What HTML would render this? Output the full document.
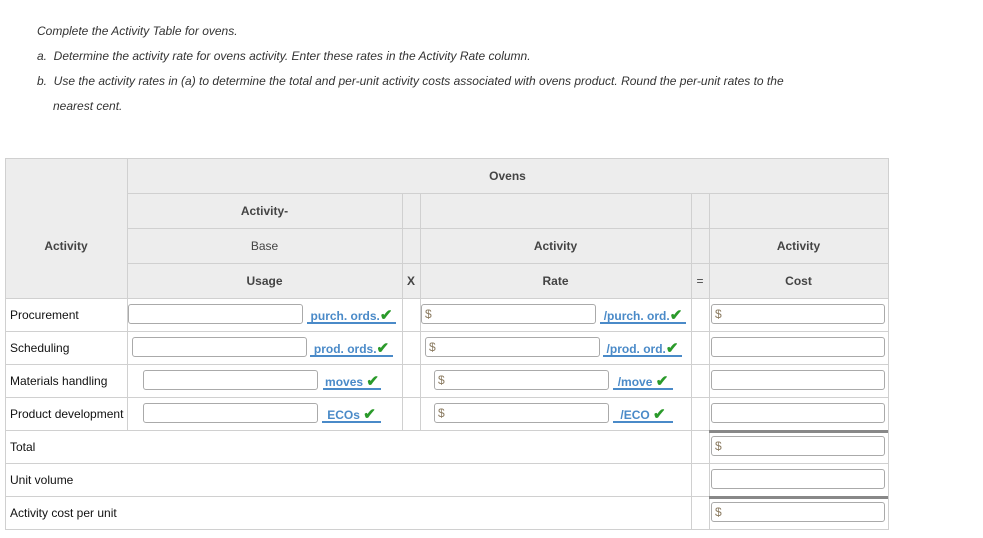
<!DOCTYPE html>
<html><head><meta charset="utf-8"><style>
body{margin:0;width:983px;height:538px;background:#fff;font-family:"Liberation Sans",Arial,sans-serif;color:#222;position:relative;overflow:hidden}
.a{position:absolute}
.t{font-size:12px;font-style:italic;color:#333}
.h{position:absolute;background:#ededed}
.hl{position:absolute;height:1px;background:#d0d0d0}
.vl{position:absolute;width:1px;background:#d0d0d0}
.ht{position:absolute;font-size:12px;font-weight:bold;color:#444;text-align:center}
.lb{position:absolute;font-size:12px;color:#111;left:10px}
.in{position:absolute;height:20px;border:1px solid #aaa;border-radius:3px;background:#fff;box-sizing:border-box;font-size:12px;color:#8a7a60;padding:2px 0 0 3px}
.lk{position:absolute;font-size:12px;font-weight:bold;color:#4a8ac8;border-bottom:2px solid #4a8ac8;height:16px;text-align:center;white-space:nowrap}
.ck{color:#2a9a2a;font-size:15px}
.tk{position:absolute;height:3px;background:#888;left:709px;width:179px}
</style></head><body>
<div class="a t" style="left:37px;top:24px">Complete the Activity Table for ovens.</div>
<div class="a t" style="left:37px;top:49px">a.&nbsp; Determine the activity rate for ovens activity. Enter these rates in the Activity Rate column.</div>
<div class="a t" style="left:37px;top:74px">b.&nbsp; Use the activity rates in (a) to determine the total and per-unit activity costs associated with ovens product. Round the per-unit rates to the</div>
<div class="a t" style="left:53px;top:99px">nearest cent.</div>

<div class="h" style="left:5px;top:158px;width:883px;height:140px"></div>
<div class="hl" style="left:5px;top:158px;width:883px"></div>
<div class="hl" style="left:127px;top:193px;width:761px"></div>
<div class="hl" style="left:127px;top:228px;width:761px"></div>
<div class="hl" style="left:127px;top:263px;width:761px"></div>
<div class="hl" style="left:5px;top:298px;width:883px"></div>
<div class="hl" style="left:5px;top:331px;width:883px"></div>
<div class="hl" style="left:5px;top:364px;width:883px"></div>
<div class="hl" style="left:5px;top:397px;width:883px"></div>
<div class="hl" style="left:5px;top:430px;width:704px"></div>
<div class="hl" style="left:5px;top:463px;width:883px"></div>
<div class="hl" style="left:5px;top:496px;width:704px"></div>
<div class="hl" style="left:5px;top:529px;width:883px"></div>
<div class="vl" style="left:5px;top:158px;height:372px"></div>
<div class="vl" style="left:127px;top:158px;height:272px"></div>
<div class="vl" style="left:402px;top:193px;height:237px"></div>
<div class="vl" style="left:420px;top:193px;height:237px"></div>
<div class="vl" style="left:691px;top:193px;height:337px"></div>
<div class="vl" style="left:709px;top:193px;height:337px"></div>
<div class="vl" style="left:888px;top:158px;height:372px"></div>

<div class="ht" style="left:127px;width:761px;top:169px">Ovens</div>
<div class="ht" style="left:5px;width:122px;top:239px">Activity</div>
<div class="ht" style="left:127px;width:275px;top:204px">Activity-</div>
<div class="ht" style="left:127px;width:275px;top:239px;font-weight:normal">Base</div>
<div class="ht" style="left:127px;width:275px;top:274px">Usage</div>
<div class="ht" style="left:402px;width:18px;top:274px">X</div>
<div class="ht" style="left:420px;width:271px;top:239px">Activity</div>
<div class="ht" style="left:420px;width:271px;top:274px">Rate</div>
<div class="ht" style="left:691px;width:18px;top:274px;font-weight:normal">=</div>
<div class="ht" style="left:709px;width:179px;top:239px">Activity</div>
<div class="ht" style="left:709px;width:179px;top:274px">Cost</div>

<div class="lb" style="top:308px">Procurement</div>
<div class="lb" style="top:341px">Scheduling</div>
<div class="lb" style="top:374px">Materials handling</div>
<div class="lb" style="top:407px">Product development</div>
<div class="lb" style="top:440px">Total</div>
<div class="lb" style="top:473px">Unit volume</div>
<div class="lb" style="top:506px">Activity cost per unit</div>

<div class="in" style="left:128px;top:304px;width:175px"></div>
<div class="lk" style="left:307px;top:306px;width:89px">purch. ords.<span class="ck">✔</span></div>
<div class="in" style="left:421px;top:304px;width:175px">$</div>
<div class="lk" style="left:600px;top:306px;width:86px">/purch. ord.<span class="ck">✔</span></div>

<div class="in" style="left:132px;top:337px;width:175px"></div>
<div class="lk" style="left:310px;top:339px;width:83px">prod. ords.<span class="ck">✔</span></div>
<div class="in" style="left:425px;top:337px;width:175px">$</div>
<div class="lk" style="left:603px;top:339px;width:79px">/prod. ord.<span class="ck">✔</span></div>

<div class="in" style="left:143px;top:370px;width:175px"></div>
<div class="lk" style="left:323px;top:372px;width:58px">moves <span class="ck">✔</span></div>
<div class="in" style="left:434px;top:370px;width:175px">$</div>
<div class="lk" style="left:613px;top:372px;width:60px">/move <span class="ck">✔</span></div>

<div class="in" style="left:143px;top:403px;width:175px"></div>
<div class="lk" style="left:322px;top:405px;width:59px">ECOs <span class="ck">✔</span></div>
<div class="in" style="left:434px;top:403px;width:175px">$</div>
<div class="lk" style="left:613px;top:405px;width:60px">/ECO <span class="ck">✔</span></div>

<div class="in" style="left:711px;top:304px;width:174px">$</div>
<div class="in" style="left:711px;top:337px;width:174px"></div>
<div class="in" style="left:711px;top:370px;width:174px"></div>
<div class="in" style="left:711px;top:403px;width:174px"></div>
<div class="tk" style="top:430px"></div>
<div class="in" style="left:711px;top:436px;width:174px">$</div>
<div class="in" style="left:711px;top:469px;width:174px"></div>
<div class="tk" style="top:496px"></div>
<div class="in" style="left:711px;top:502px;width:174px">$</div>
</body></html>
